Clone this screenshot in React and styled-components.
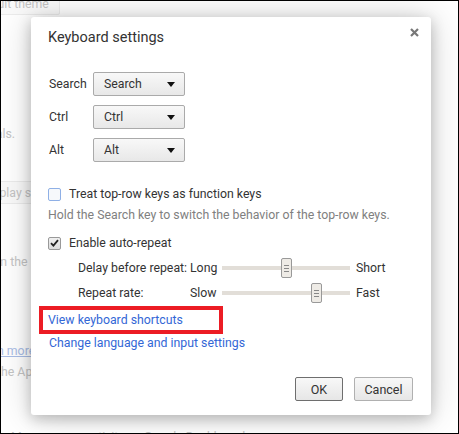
import styled, { createGlobalStyle } from "styled-components";

const GlobalStyle = createGlobalStyle`
  html, body {
    margin: 0;
    padding: 0;
    background: #fff;
  }
  body {
    font-family: Roboto, "Noto Sans", "Liberation Sans", sans-serif;
    font-size: 12.3px;
    color: #333;
  }
`;

const Frame = styled.div`
  position: relative;
  width: 459px;
  height: 434px;
  box-sizing: border-box;
  border: 1px solid #000;
  overflow: hidden;
  background: #fff;
`;

// faded settings page behind the dialog
const Page = styled.div`
  display: flex;
  flex-direction: column;
  align-items: flex-start;
`;

const BgLine = styled.div`
  margin-top: ${(p) => p.$top}px;
  margin-left: ${(p) => p.$shift}px;
  line-height: 16px;
  white-space: nowrap;
  color: #c4c4c4;
`;

const BgLink = styled(BgLine)`
  color: #a9bde6;
  text-decoration: underline;
`;

const BgButton = styled.div`
  margin-top: ${(p) => p.$top}px;
  margin-left: ${(p) => p.$shift}px;
  height: 23px;
  padding: 0 10px;
  display: flex;
  align-items: center;
  box-sizing: border-box;
  border: 1px solid #ececec;
  border-radius: 2px;
  background: #fafafa;
  color: #c4c4c4;
  white-space: nowrap;
`;

const Dialog = styled.div`
  position: absolute;
  left: 30px;
  top: 16px;
  width: 400px;
  height: 398px;
  box-sizing: border-box;
  padding: 0 18px 14px 17px;
  background: #fff;
  border-radius: 3px;
  box-shadow: 0 4px 14px rgba(0, 0, 0, 0.22), 0 0 36px rgba(0, 0, 0, 0.18);
  display: flex;
  flex-direction: column;
`;

const Header = styled.div`
  display: flex;
  justify-content: space-between;
  align-items: center;
  margin-top: 12px;
`;

const Title = styled.h1`
  margin: 0;
  font-size: 14.5px;
  font-weight: 400;
  line-height: 18px;
  color: #333;
`;

const Close = styled.button`
  width: 14px;
  height: 14px;
  padding: 0;
  border: 0;
  background: none;
  display: flex;
  align-items: center;
  justify-content: center;
  margin-right: -8px;
  margin-top: -12px;
`;

const KeyGrid = styled.div`
  display: grid;
  grid-template-columns: 44px 92px;
  row-gap: 9px;
  align-items: center;
  margin-top: 25px;
  margin-left: 1px;
`;

const KeyLabel = styled.span`
  line-height: 16px;
`;

const Select = styled.div`
  height: 24px;
  box-sizing: border-box;
  padding: 0 9px 0 10px;
  display: flex;
  align-items: center;
  justify-content: space-between;
  border: 1px solid #aaa;
  border-radius: 2px;
  background: linear-gradient(#f8f8f8, #e8e8e8);
  color: #333;
`;

const Arrow = styled.span`
  width: 0;
  height: 0;
  border-left: 4.5px solid transparent;
  border-right: 4.5px solid transparent;
  border-top: 5px solid #111;
`;

const CheckRow = styled.label`
  display: flex;
  align-items: center;
  gap: 8px;
  margin-top: ${(p) => p.$top}px;
  line-height: 16px;
`;

const Box = styled.span`
  width: 13px;
  height: 13px;
  box-sizing: border-box;
  border: 1px solid ${(p) => (p.$checked ? "#999" : "#8fb0e6")};
  border-radius: 2px;
  background: ${(p) => (p.$checked ? "linear-gradient(#f0f0f0, #dcdcdc)" : "#f6f8fb")};
  display: flex;
  align-items: center;
  justify-content: center;
`;

const Hint = styled.div`
  margin-top: 5px;
  line-height: 16px;
  color: #808080;
`;

const SliderGrid = styled.div`
  display: grid;
  grid-template-columns: 106px 26px 128px auto;
  column-gap: 6px;
  row-gap: 5px;
  align-items: center;
  margin-top: 7px;
  margin-left: 30px;
`;

const Cell = styled.span`
  line-height: 20px;
  white-space: nowrap;
`;

const Track = styled.div`
  position: relative;
  height: 20px;
  display: flex;
  align-items: center;
  &::before {
    content: "";
    flex: 1;
    height: 4px;
    background: #e2ded8;
  }
`;

const Thumb = styled.span`
  position: absolute;
  top: 0;
  width: 11px;
  height: 20px;
  box-sizing: border-box;
  border: 1px solid #999;
  border-radius: 2px;
  background: #eeebe6;
  display: flex;
  flex-direction: column;
  align-items: center;
  justify-content: center;
  gap: 2px;
  & > i {
    display: block;
    width: 5px;
    height: 1px;
    background: #888;
  }
`;

const Links = styled.div`
  display: flex;
  flex-direction: column;
  align-items: flex-start;
  margin-top: 3px;
  margin-left: 1px;
`;

const Highlight = styled.div`
  box-sizing: border-box;
  width: 184px;
  height: 28px;
  margin-left: -10px;
  padding-left: 5px;
  border: 4px solid #ec1c24;
  display: flex;
  align-items: center;
`;

const Link = styled.a`
  color: #3367d6;
  text-decoration: none;
  line-height: 16px;
  margin-top: ${(p) => p.$top || 0}px;
  cursor: pointer;
`;

const Footer = styled.div`
  margin-top: auto;
  display: flex;
  justify-content: flex-end;
  gap: 11px;
`;

const Button = styled.button`
  height: 24px;
  width: ${(p) => p.$width}px;
  box-sizing: border-box;
  padding: 0;
  font-family: inherit;
  font-size: 12.5px;
  color: #333;
  border: 1px solid ${(p) => (p.$focused ? "#6e6e6e" : "#b0b0b0")};
  border-radius: 2px;
  background: linear-gradient(#f8f8f8, #e6e6e6);
`;

const Slider = ({ value }) => (
  <Track>
    <Thumb style={{ left: `${value * 117}px` }}>
      <i />
      <i />
      <i />
    </Thumb>
  </Track>
);

const keys = ["Search", "Ctrl", "Alt"];

export default function App() {
  return (
    <>
      <GlobalStyle />
      <Frame>
        <Page>
          <BgButton $top={-9} $shift={-87}>Reset to default theme</BgButton>
          <BgLine $top={111} $shift={-40}>numerals.</BgLine>
          <BgButton $top={39} $shift={-30}>Display settings</BgButton>
          <BgLine $top={50} $shift={-20}>from the</BgLine>
          <BgLink $top={73} $shift={-28}>Learn more</BgLink>
          <BgLine $top={5} $shift={-4}>the Apps</BgLine>
          <BgLine $top={49} $shift={10}>Manage your activity on Google Dashboard</BgLine>
        </Page>

        <Dialog role="dialog">
          <Header>
            <Title>Keyboard settings</Title>
            <Close aria-label="Close">
              <svg width="9" height="9" viewBox="0 0 9 9">
                <path d="M1 1L8 8M8 1L1 8" stroke="#777" strokeWidth="2.2" />
              </svg>
            </Close>
          </Header>

          <KeyGrid>
            {keys.map((k) => [
              <KeyLabel key={k + "l"}>{k}</KeyLabel>,
              <Select key={k + "s"}>
                {k}
                <Arrow />
              </Select>,
            ])}
          </KeyGrid>

          <CheckRow $top={24}>
            <Box />
            Treat top-row keys as function keys
          </CheckRow>
          <Hint>Hold the Search key to switch the behavior of the top-row keys.</Hint>

          <CheckRow $top={12}>
            <Box $checked>
              <svg width="9" height="8" viewBox="0 0 9 8">
                <path d="M1 4.2L3.4 6.6L8 1.2" fill="none" stroke="#222" strokeWidth="1.8" />
              </svg>
            </Box>
            Enable auto-repeat
          </CheckRow>

          <SliderGrid>
            <Cell>Delay before repeat:</Cell>
            <Cell>Long</Cell>
            <Slider value={0.5} />
            <Cell>Short</Cell>
            <Cell>Repeat rate:</Cell>
            <Cell>Slow</Cell>
            <Slider value={0.76} />
            <Cell>Fast</Cell>
          </SliderGrid>

          <Links>
            <Highlight>
              <Link>View keyboard shortcuts</Link>
            </Highlight>
            <Link $top={1}>Change language and input settings</Link>
          </Links>

          <Footer>
            <Button $width={48} $focused>OK</Button>
            <Button $width={59}>Cancel</Button>
          </Footer>
        </Dialog>
      </Frame>
    </>
  );
}
